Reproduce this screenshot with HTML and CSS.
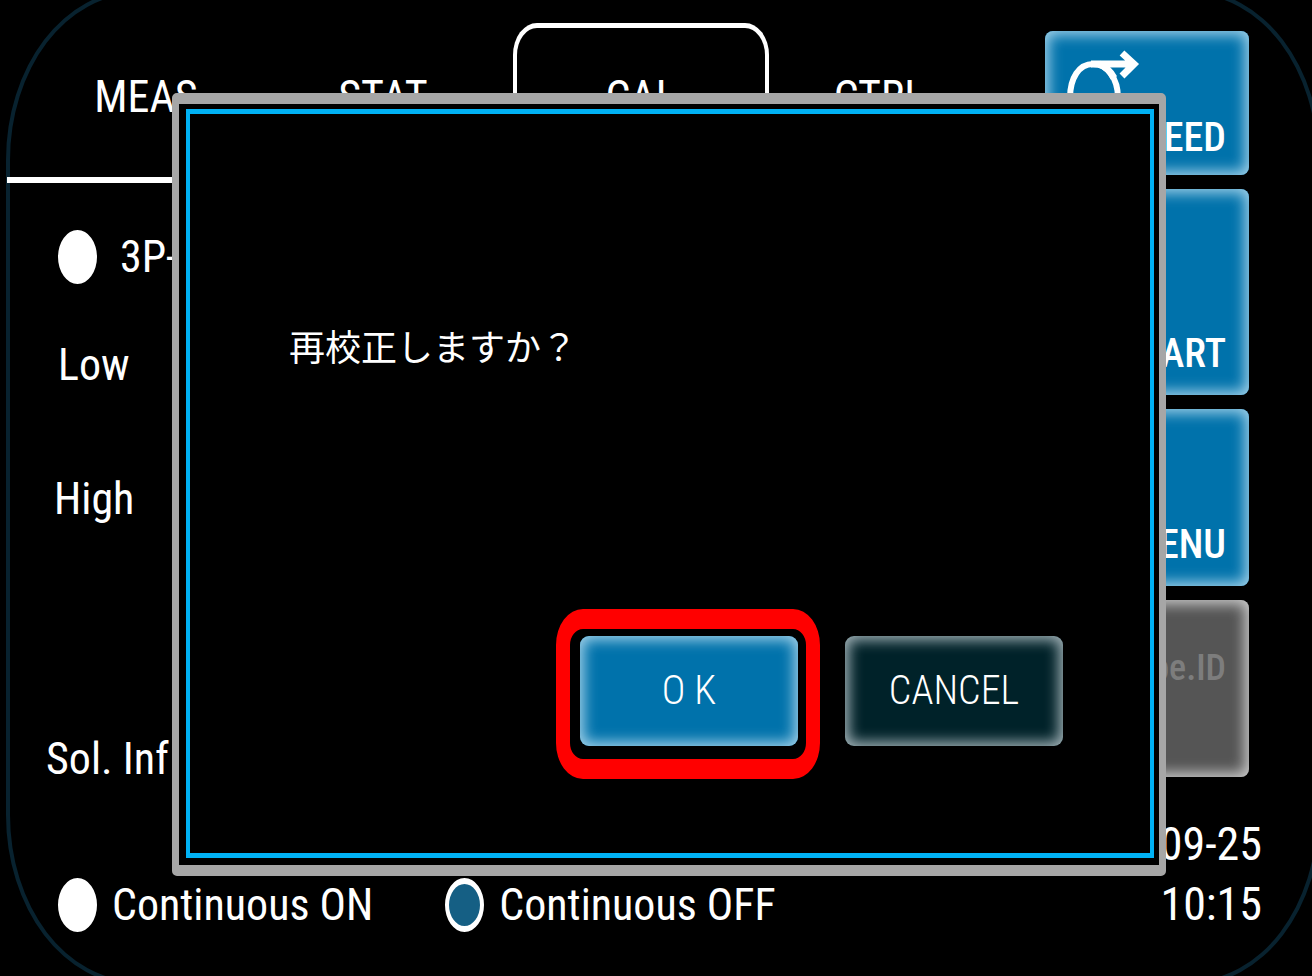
FILE: index.html
```html
<!DOCTYPE html>
<html lang="ja">
<head>
<meta charset="utf-8">
<title>CAL</title>
<link rel="stylesheet" href="styles.css">
</head>
<body>
<div class="screen">
  <div class="bezel"></div>
  <div class="content">
    <nav class="tabs">
      <button class="tab tab-first" type="button">MEAS</button>
      <button class="tab" type="button">STAT</button>
      <button class="tab tab-active" type="button">CAL</button>
      <button class="tab" type="button">CTRL</button>
    </nav>
    <main class="settings">
      <label class="option"><input class="dot" type="radio" name="method"><span class="method-name">3P-</span></label>
      <p class="field field-low">Low</p>
      <p class="field field-high">High</p>
      <p class="field field-solution">Sol. Inf</p>
      <div class="modes">
        <label class="option"><input class="dot" type="radio" name="mode"><span>Continuous ON</span></label>
        <label class="option"><input class="dot" type="radio" name="mode" checked><span>Continuous OFF</span></label>
      </div>
    </main>
  </div>
  <aside class="side">
    <button class="key key-feed" type="button">
      <svg class="feed-icon" width="76" height="76" viewBox="0 0 76 76" fill="none" stroke="#fff" stroke-width="6">
        <path d="M5 48C5 28 14 14 28 14C42 14 53 28 53 48C53 82 5 82 5 48Z"/>
        <path d="M26 14H68M57 3L69 14L57 26" stroke-width="7"/>
        <path d="M34 14Q43 17 49 28" stroke-width="7"/>
      </svg>
      <span>FEED</span>
    </button>
    <button class="key key-start" type="button">START</button>
    <button class="key key-menu" type="button">MENU</button>
    <button class="key key-id" type="button" disabled>Type.ID</button>
    <div class="clock"><span>09-25</span><time>10:15</time></div>
  </aside>
  <div class="dialog" role="dialog" aria-labelledby="question">
    <div class="dialog-body">
      <p class="question" id="question">再校正しますか？</p>
      <div class="actions">
        <div class="highlight"><button class="action action-ok" type="button">O K</button></div>
        <button class="action action-cancel" type="button">CANCEL</button>
      </div>
    </div>
  </div>
</div>
</body>
</html>
```
FILE: styles.css
```css
* { box-sizing: border-box; }
body {
  margin: 0;
  background: #000;
  color: #fff;
  font-family: "Roboto Condensed", Roboto, "Noto Sans CJK JP", sans-serif;
  font-size: 44px;
  line-height: 60px;
}
button {
  border: 0;
  padding: 0;
  background: none;
  color: inherit;
  font: inherit;
}
p { margin: 0; }
.screen {
  position: relative;
  display: grid;
  grid-template-columns: minmax(0, 1fr) 217px;
  min-height: 100vh;
  padding: 0 50px 0 7px;
  overflow: hidden;
}
.bezel {
  position: absolute;
  inset: -10px -9px -9px 6px;
  border: 4px solid #08222f;
  border-radius: 130px / 170px;
  pointer-events: none;
}
.content { position: relative; }
.tabs {
  display: grid;
  grid-template-columns: 246fr 260fr 256fr 221fr;
  height: 183px;
  margin-right: 55px;
  padding-top: 23px;
  border-bottom: 6px solid #fff;
}
.tab { padding-bottom: 6px; }
.tab-first { padding-left: 32px; }
.tab-active {
  padding-bottom: 11px;
  border: 5px solid #fff;
  border-width: 5px 4px 0;
  border-radius: 24px 24px 0 0 / 32px 32px 0 0;
}
.settings { padding: 44px 0 40px 51px; }
.option { display: flex; align-items: center; gap: 15px; }
.dot {
  appearance: none;
  width: 39px;
  height: 54px;
  margin: 0;
  border: solid #fff;
  border-width: 6px 4px;
  border-radius: 50%;
  background: #fff;
}
.dot:checked { background: #155f84; }
.method-name { padding-left: 8px; }
.field-low { margin-top: 48px; }
.field-high { margin-top: 74px; margin-left: -4px; }
.field-solution { margin-top: 200px; margin-left: -12px; }
.modes { display: flex; gap: 72px; margin-top: 86px; }
.side { display: flex; flex-direction: column; padding-top: 31px; }
.key {
  display: flex;
  justify-content: flex-end;
  align-items: flex-end;
  margin: 0 13px 14px 0;
  padding: 0 23px 7px;
  border-radius: 8px;
  background: #0072ab;
  box-shadow: inset 0 0 14px 4px #9fd0e8;
  font-size: 40px;
  font-weight: 500;
}
.key-feed { position: relative; height: 144px; }
.feed-icon { position: absolute; left: 20px; top: 19px; }
.key-start { height: 206px; padding-bottom: 11px; }
.key-menu { height: 177px; padding-bottom: 11px; }
.key-id {
  height: 177px;
  align-items: center;
  padding-bottom: 42px;
  background: #555;
  box-shadow: inset 0 0 14px 4px #ccc;
  color: #7d7d7d;
  font-size: 36px;
}
.clock {
  display: flex;
  flex-direction: column;
  align-items: flex-end;
  margin-top: 23px;
  font-size: 46px;
}
.dialog {
  position: absolute;
  inset: 93px 146px 100px 172px;
  display: flex;
  padding: 5px 5px 7px 7px;
  border: solid #a6a6a6;
  border-width: 11px 7px;
  border-radius: 5px;
  background: #000;
}
.dialog-body {
  flex: 1;
  display: flex;
  flex-direction: column;
  justify-content: space-between;
  padding: 201px 87px 74px 99px;
  border: solid #00b2f5;
  border-width: 5px 4px;
}
.question { font-family: "Noto Sans CJK JP", sans-serif; font-size: 36px; }
.actions { display: flex; justify-content: flex-end; gap: 25px; }
.highlight {
  padding: 7px 8px 13px 10px;
  border: solid #f00;
  border-width: 20px 14px;
  border-radius: 27px / 36px;
}
.action {
  display: block;
  width: 218px;
  height: 110px;
  border-radius: 9px;
  font-size: 40px;
  font-weight: 300;
}
.action-ok { background: #0072ab; box-shadow: inset 0 0 14px 4px #9fd0e8; }
.action-cancel { margin-top: 27px; background: #002229; box-shadow: inset 0 0 14px 4px #a3b3b8; }
```
